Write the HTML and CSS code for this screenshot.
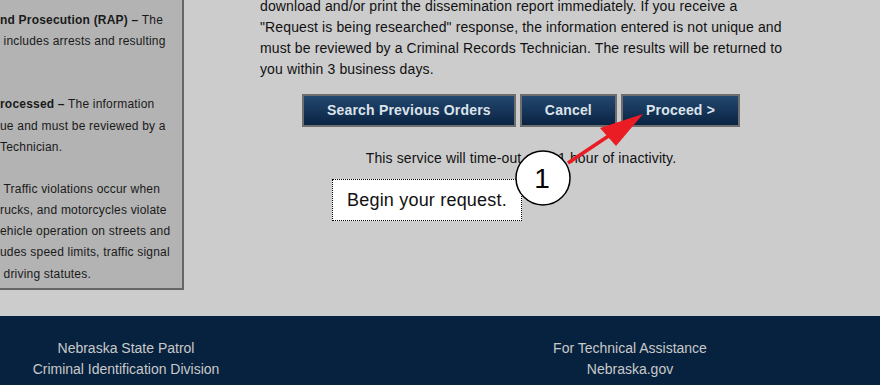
FILE: index.html
```html
<!DOCTYPE html>
<html lang="en">
<head>
    <meta charset="UTF-8">
    <meta name="viewport" content="width=device-width, initial-scale=1.0">
    <title>Criminal History Request</title>
    <link rel="stylesheet" href="styles.css">
</head>
<body>

<div class="page">
    <!-- Left info panel (scrolled partly off screen) -->
    <div class="sidebar">
        <p>
            <b>nd Prosecution (RAP) &ndash;</b> The<br>
            &nbsp;includes arrests and resulting<br>
            &nbsp;
        </p>
        <p>
            <b>rocessed &ndash;</b> The information<br>
            ue and must be reviewed by a<br>
            Technician.
        </p>
        <p>
            &nbsp;Traffic violations occur when<br>
            rucks, and motorcycles violate<br>
            ehicle operation on streets and<br>
            udes speed limits, traffic signal<br>
            &nbsp;driving statutes.
        </p>
    </div>

    <div class="main">
        <p class="intro">
            download and/or print the dissemination report immediately. If you receive a<br>
            "Request is being researched" response, the information entered is not unique and<br>
            must be reviewed by a Criminal Records Technician. The results will be returned to<br>
            you within 3 business days.
        </p>
        <div class="actions">
            <button class="button">Search Previous Orders</button>
            <button class="button">Cancel</button>
            <button class="button">Proceed &gt;</button>
        </div>
        <p class="timeout">This service will time-out after 1 hour of inactivity.</p>
    </div>
</div>

<footer>
    <div class="footer-col">
        <p>Nebraska State Patrol</p>
        <p>Criminal Identification Division</p>
    </div>
    <div class="footer-col">
        <p>For Technical Assistance</p>
        <p>Nebraska.gov</p>
    </div>
</footer>

<!-- Tutorial annotation -->
<div class="callout">Begin your request.</div>
<svg class="overlay" width="880" height="385" viewBox="0 0 880 385">
    <circle cx="543" cy="178" r="27" fill="#fff" stroke="#000" stroke-width="1.5"/>
    <text x="542" y="188" font-family="Liberation Sans, Arial, sans-serif" font-size="28" text-anchor="middle">1</text>
    <line x1="568" y1="163" x2="610" y2="135" stroke="#ea1c24" stroke-width="3.5"/>
    <polygon points="643,114 600,128 616,146" fill="#ea1c24"/>
</svg>

</body>
</html>
```

FILE: styles.css
```css
body {
    margin: 0;
    padding: 0;
    font-family: "Liberation Sans", Arial, sans-serif;
    font-size: 14px;
    color: #111;
    background-color: #cccccc;
    position: relative;
    overflow: hidden;
    height: 385px;
}

p {
    margin: 0;
}

.page {
    display: flex;
    align-items: flex-start;
}

.sidebar {
    box-sizing: border-box;
    width: 206px;
    margin: -2px 0 0 -22px;
    padding: 10px 10px 3px 20px;
    background-color: #b3b3b3;
    border: 2px solid #666;
    font-size: 12px;
    line-height: 21.15px;
    letter-spacing: 0.2px;
    color: #1a1a1a;
    white-space: nowrap;
    overflow: hidden;
}

.sidebar p + p {
    margin-top: 21px;
}

.main {
    width: 522px;
    margin: -4px 0 0 76px;
    letter-spacing: 0.12px;
}

.intro {
    line-height: 21px;
    white-space: nowrap;
}

.actions {
    display: flex;
    justify-content: center;
    gap: 4px;
    margin-top: 14px;
}

.button {
    font-family: "Liberation Sans", Arial, sans-serif;
    font-size: 14px;
    font-weight: bold;
    letter-spacing: 0.2px;
    line-height: 17px;
    padding: 6px 23px;
    color: #dde3ea;
    background: linear-gradient(#234870, #0a2342);
    border: 2px solid #6e6e6e;
    border-radius: 0;
    cursor: pointer;
}

.timeout {
    margin-top: 21px;
    line-height: 21px;
    text-align: center;
}

footer {
    margin-top: 26px;
    padding: 22px 0 40px;
    background-color: #07223f;
    color: #c9c9c9;
    display: grid;
    grid-template-columns: 252px 252px;
    column-gap: 252px;
    line-height: 21px;
    text-align: center;
}

.callout {
    position: absolute;
    left: 332px;
    top: 179px;
    width: 190px;
    height: 42px;
    box-sizing: border-box;
    padding-left: 14px;
    background: #fff;
    border: 1px dotted #000;
    font-size: 18px;
    letter-spacing: 0.2px;
    line-height: 40px;
    color: #111;
}

.overlay {
    position: absolute;
    left: 0;
    top: 0;
    pointer-events: none;
}
```
